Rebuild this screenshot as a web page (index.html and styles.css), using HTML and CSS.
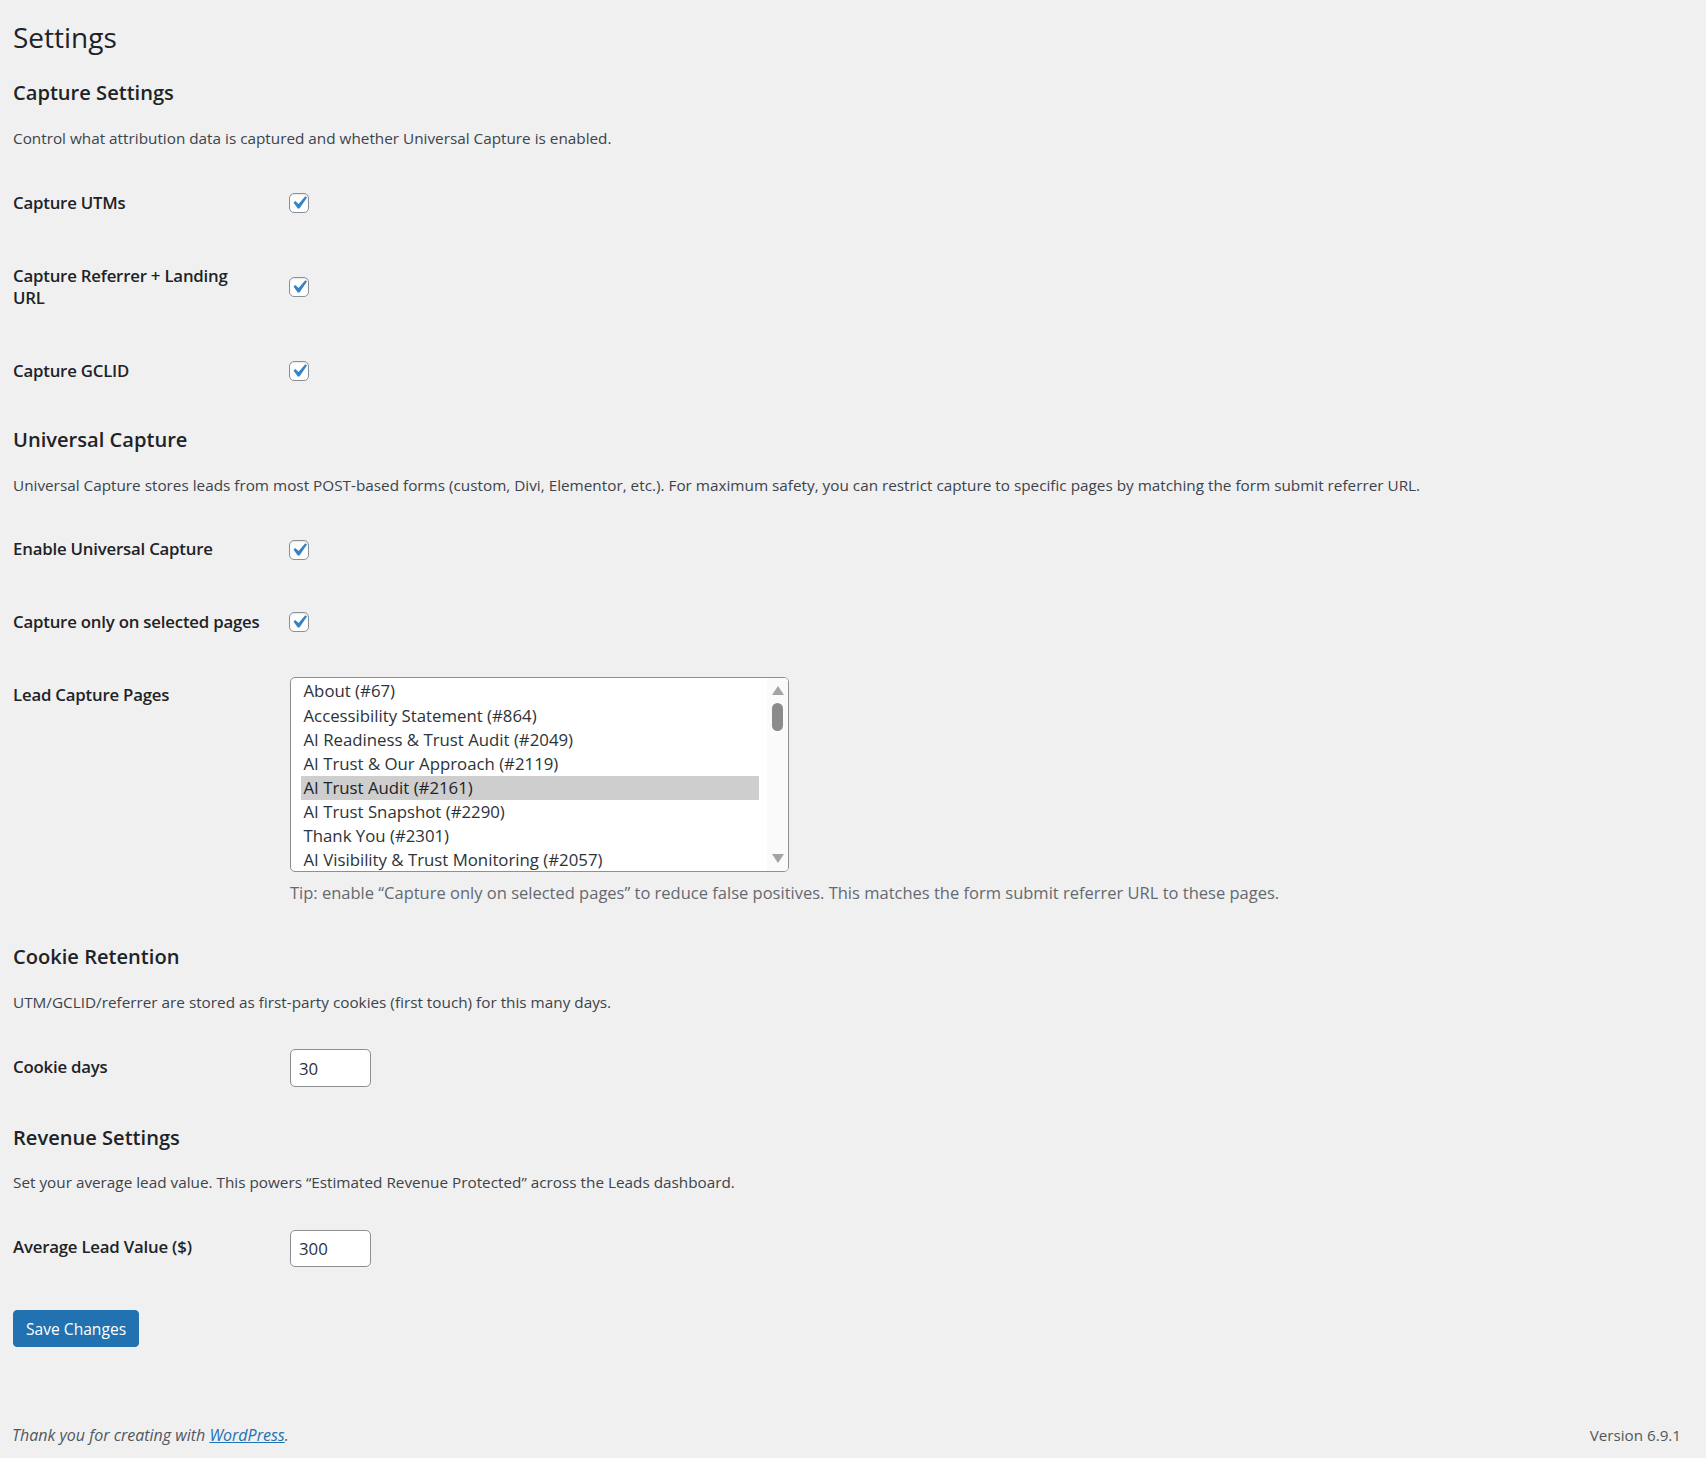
FILE: index.html
```html
<!DOCTYPE html>
<html lang="en">
<head>
  <meta charset="UTF-8" />
  <title>Settings</title>
  <link rel="stylesheet" href="styles.css">
</head>
<body>
  <div class="wrap">
    <h1>Settings</h1>
    <form>
      <h2>Capture Settings</h2>
      <p>Control what attribution data is captured and whether Universal Capture is enabled.</p>
      <table class="form-table">
        <tr class="check-row">
          <th>Capture UTMs</th>
          <td><span class="checkbox"><svg viewBox="0 0 20 20"><path d="M14.83 4.89l1.34.94-5.81 8.38H9.020L5.78 9.67l1.34-1.25 2.57 2.4z"/></svg></span></td>
        </tr>
        <tr class="check-row">
          <th>Capture Referrer + Landing URL</th>
          <td><span class="checkbox"><svg viewBox="0 0 20 20"><path d="M14.83 4.89l1.34.94-5.81 8.38H9.020L5.78 9.67l1.34-1.25 2.57 2.4z"/></svg></span></td>
        </tr>
        <tr class="check-row">
          <th>Capture GCLID</th>
          <td><span class="checkbox"><svg viewBox="0 0 20 20"><path d="M14.83 4.89l1.34.94-5.81 8.38H9.020L5.78 9.67l1.34-1.25 2.57 2.4z"/></svg></span></td>
        </tr>
      </table>

      <h2>Universal Capture</h2>
      <p>Universal Capture stores leads from most POST-based forms (custom, Divi, Elementor, etc.). For maximum safety, you can restrict capture to specific pages by matching the form submit referrer URL.</p>
      <table class="form-table">
        <tr class="check-row">
          <th>Enable Universal Capture</th>
          <td><span class="checkbox"><svg viewBox="0 0 20 20"><path d="M14.83 4.89l1.34.94-5.81 8.38H9.020L5.78 9.67l1.34-1.25 2.57 2.4z"/></svg></span></td>
        </tr>
        <tr class="check-row">
          <th>Capture only on selected pages</th>
          <td><span class="checkbox"><svg viewBox="0 0 20 20"><path d="M14.83 4.89l1.34.94-5.81 8.38H9.020L5.78 9.67l1.34-1.25 2.57 2.4z"/></svg></span></td>
        </tr>
        <tr>
          <th>Lead Capture Pages</th>
          <td>
            <div class="page-list">
              <ul class="options">
                <li>About (#67)</li>
                <li>Accessibility Statement (#864)</li>
                <li>AI Readiness &amp; Trust Audit (#2049)</li>
                <li>AI Trust &amp; Our Approach (#2119)</li>
                <li class="selected">AI Trust Audit (#2161)</li>
                <li>AI Trust Snapshot (#2290)</li>
                <li>Thank You (#2301)</li>
                <li>AI Visibility &amp; Trust Monitoring (#2057)</li>
              </ul>
              <div class="scrollbar">
                <span class="arrow up"></span>
                <span class="thumb"></span>
                <span class="track"></span>
                <span class="arrow down"></span>
              </div>
            </div>
            <p class="description">Tip: enable “Capture only on selected pages” to reduce false positives. This matches the form submit referrer URL to these pages.</p>
          </td>
        </tr>
      </table>

      <h2>Cookie Retention</h2>
      <p>UTM/GCLID/referrer are stored as first-party cookies (first touch) for this many days.</p>
      <table class="form-table">
        <tr>
          <th>Cookie days</th>
          <td><input type="text" class="small-text" value="30"></td>
        </tr>
      </table>

      <h2>Revenue Settings</h2>
      <p>Set your average lead value. This powers “Estimated Revenue Protected” across the Leads dashboard.</p>
      <table class="form-table">
        <tr>
          <th>Average Lead Value ($)</th>
          <td><input type="text" class="small-text" value="300"></td>
        </tr>
      </table>

      <p class="submit"><button type="button" class="button-primary">Save Changes</button></p>
    </form>
  </div>

  <div class="footer">
    <p class="thanks">Thank you for creating with <a href="#">WordPress</a>.</p>
    <p class="version">Version 6.9.1</p>
  </div>
</body>
</html>
```

FILE: styles.css
```css
html, body {
  margin: 0;
  height: 100%;
}

body {
  background: #f0f0f1;
  color: #3c434a;
  font-family: 'Open Sans', sans-serif;
  font-size: 16.25px;
  line-height: 22.75px;
  display: flex;
  flex-direction: column;
  min-height: 100vh;
}

.wrap {
  padding: 8px 0 0 13px;
}

h1 {
  margin: 0;
  padding: 11px 0 5px;
  font-size: 28px;
  font-weight: 400;
  line-height: 37.4px;
  color: #1d2327;
}

h2 {
  margin: 21px 0;
  font-size: 20.1px;
  font-weight: 600;
  line-height: 22.75px;
  color: #1d2327;
}

p {
  margin: 16.25px 0;
  line-height: 24.4px;
  font-size: 15.3px;
}

.form-table {
  border-collapse: collapse;
  margin-top: 8px;
  width: 100%;
}

.form-table th {
  width: 248px;
  padding: 25px 16.5px 25px 0;
  text-align: left;
  vertical-align: top;
  font-size: 16.8px;
  font-weight: 600;
  line-height: 22.75px;
  letter-spacing: -0.2px;
  color: #1d2327;
}

.form-table td {
  padding: 18.75px 12.5px;
  vertical-align: top;
  font-size: 16.8px;
  line-height: 22.75px;
}

.form-table .check-row td {
  vertical-align: middle;
  padding-top: 0;
  padding-bottom: 0;
}

.checkbox {
  display: block;
  width: 20px;
  height: 20px;
  margin-left: -1px;
  box-sizing: border-box;
  border: 1px solid #8c8f94;
  border-radius: 5px;
  background: #fff;
  box-shadow: inset 0 1px 2px rgba(0, 0, 0, 0.1);
  position: relative;
}

.checkbox svg {
  position: absolute;
  left: -4px;
  top: -4px;
  width: 26px;
  height: 26px;
  fill: #3582c4;
}

.page-list {
  display: flex;
  width: 499px;
  height: 195px;
  box-sizing: border-box;
  border: 1px solid #8c8f94;
  border-radius: 5px;
  background: #fff;
  overflow: hidden;
}

.options {
  flex: 1;
  list-style: none;
  margin: 0;
  padding: 1px 8px 0 10px;
  font-size: 16.8px;
  color: #2c3338;
  overflow: hidden;
}

.options li {
  height: 24.1px;
  line-height: 24.1px;
  padding: 0 2.5px;
  white-space: nowrap;
}

.options li.selected {
  background: #cecece;
  color: #1d2327;
}

.scrollbar {
  width: 21px;
  display: flex;
  flex-direction: column;
  align-items: center;
  padding: 8px 0 8px;
  background: #fafafa;
}

.arrow {
  width: 0;
  height: 0;
  border-left: 6px solid transparent;
  border-right: 6px solid transparent;
}

.arrow.up {
  border-bottom: 9px solid #a3a3a3;
}

.arrow.down {
  border-top: 9px solid #a3a3a3;
}

.thumb {
  width: 11px;
  height: 28px;
  margin-top: 8px;
  border-radius: 5.5px;
  background: #8b8b8b;
}

.track {
  flex: 1;
}

.form-table p.description {
  margin: 8px 0 0;
  color: #646970;
  font-size: 16.5px;
  line-height: 26px;
}

.small-text {
  display: block;
  width: 81px;
  height: 37.5px;
  box-sizing: border-box;
  padding: 0 8px;
  border: 1px solid #8c8f94;
  border-radius: 5px;
  background: #fff;
  font-family: 'Open Sans', sans-serif;
  font-size: 16.8px;
  color: #2c3338;
}

.submit {
  margin: 24px 0 0;
  padding: 0;
}

.button-primary {
  height: 37px;
  padding: 0 12px;
  border: 1px solid #2271b1;
  border-radius: 4px;
  background: #2271b1;
  color: #fff;
  font-family: 'Open Sans', sans-serif;
  font-size: 15.6px;
  cursor: pointer;
}

.footer {
  margin-top: auto;
  display: flex;
  justify-content: space-between;
  padding: 10px 25px 10px 12px;
  color: #50575e;
}

.footer p {
  margin: 0;
  font-size: 16px;
  line-height: 25px;
}

.footer .version {
  font-size: 15.2px;
}

.thanks {
  font-style: italic;
}

.thanks a {
  color: #2271b1;
}
```
